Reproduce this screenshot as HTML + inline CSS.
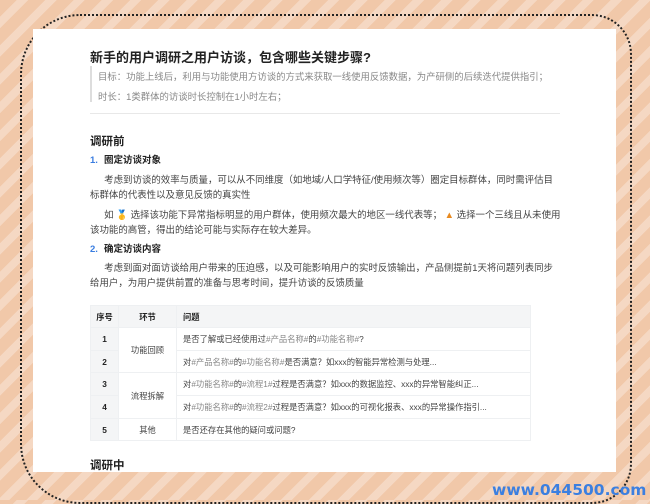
<!DOCTYPE html>
<html><head><meta charset="utf-8"><style>
*{margin:0;padding:0;box-sizing:border-box}
body{width:650px;height:500px;overflow:hidden;position:relative;font-family:"Liberation Sans","Noto Sans CJK SC",sans-serif;
background:repeating-linear-gradient(135deg,#f1c8a9 0 12px,#f5d8c3 12px 20px);}
.dots{position:absolute;left:20px;top:14px;width:612px;height:490px;border:2.5px dotted #222;border-radius:60px 40px 40px 60px}
.card{position:absolute;left:33px;top:29px;width:583px;height:443px;background:#fff}
.t{position:absolute;left:90px;white-space:nowrap}
h1{font-size:13px;font-weight:bold;color:#222}
.q{font-size:9.4px;color:#888}
.bar{position:absolute;left:90px;top:66px;width:2px;height:36px;background:#ddd}
.hr{position:absolute;left:90px;top:113px;width:470px;height:1px;background:#e8e8e8}
.h2{font-size:11.5px;font-weight:bold;color:#222}
.h3{font-size:9.5px;font-weight:bold;color:#222}
.h3 b{color:#3a7de0;margin-right:6px}
.p{font-size:9.45px;color:#444}
table{position:absolute;left:90px;top:305px;width:441px;border-collapse:collapse;font-size:8.3px;color:#444;table-layout:fixed}
td,th{border:1px solid #eef0f2;height:22.7px;padding:0 6px;white-space:nowrap;overflow:hidden}
th{background:#f4f5f6;font-weight:bold;color:#222;text-align:left;height:22px}
td.n{background:#f4f5f6;font-weight:bold;text-align:center;color:#222;padding:0}
.c{text-align:center}
.g{color:#888}
.wm{position:absolute;left:492px;top:481px;font-size:15.5px;font-weight:bold;color:#3b7fe0;font-family:"DejaVu Sans",sans-serif}
</style></head><body>
<div class="dots"></div>
<div class="card"></div>
<div class="t" style="top:47px"><h1>新手的用户调研之用户访谈，包含哪些关键步骤?</h1></div>
<div class="bar"></div>
<div class="t q" style="left:98px;top:69px">目标：功能上线后，利用与功能使用方访谈的方式来获取一线使用反馈数据，为产研侧的后续迭代提供指引；</div>
<div class="t q" style="left:98px;top:89px">时长：1类群体的访谈时长控制在1小时左右；</div>
<div class="hr"></div>
<div class="t h2" style="top:133px">调研前</div>
<div class="t h3" style="top:152px"><b>1.</b>圈定访谈对象</div>
<div class="t p" style="top:172px">&emsp;&ensp;考虑到访谈的效率与质量，可以从不同维度（如地域/人口学特征/使用频次等）圈定目标群体，同时需评估目</div>
<div class="t p" style="top:187px">标群体的代表性以及意见反馈的真实性</div>
<div class="t p" style="top:207px">&emsp;&ensp;如 <span style="color:#e8b020">🥇</span> 选择该功能下异常指标明显的用户群体，使用频次最大的地区一线代表等； <span style="color:#e88a20">▲</span> 选择一个三线且从未使用</div>
<div class="t p" style="top:222px">该功能的高管，得出的结论可能与实际存在较大差异。</div>
<div class="t h3" style="top:241px"><b>2.</b>确定访谈内容</div>
<div class="t p" style="top:260px">&emsp;&ensp;考虑到面对面访谈给用户带来的压迫感，以及可能影响用户的实时反馈输出，产品侧提前1天将问题列表同步</div>
<div class="t p" style="top:275px">给用户，为用户提供前置的准备与思考时间，提升访谈的反馈质量</div>
<table>
<colgroup><col style="width:28px"><col style="width:58px"><col></colgroup>
<tr><th style="text-align:center;padding:0">序号</th><th style="text-align:center">环节</th><th>问题</th></tr>
<tr><td class="n">1</td><td class="c" rowspan="2">功能回顾</td><td>是否了解或已经使用过<span class="g">#产品名称#</span>的<span class="g">#功能名称#</span>?</td></tr>
<tr><td class="n">2</td><td>对<span class="g">#产品名称#</span>的<span class="g">#功能名称#</span>是否满意？如xxx的智能异常检测与处理...</td></tr>
<tr><td class="n">3</td><td class="c" rowspan="2">流程拆解</td><td>对<span class="g">#功能名称#</span>的<span class="g">#流程1#</span>过程是否满意？如xxx的数据监控、xxx的异常智能纠正...</td></tr>
<tr><td class="n">4</td><td>对<span class="g">#功能名称#</span>的<span class="g">#流程2#</span>过程是否满意？如xxx的可视化报表、xxx的异常操作指引...</td></tr>
<tr><td class="n">5</td><td class="c">其他</td><td>是否还存在其他的疑问或问题?</td></tr>
</table>
<div class="t h2" style="top:457px">调研中</div>
<div class="wm">www.044500.com</div>
</body></html>
